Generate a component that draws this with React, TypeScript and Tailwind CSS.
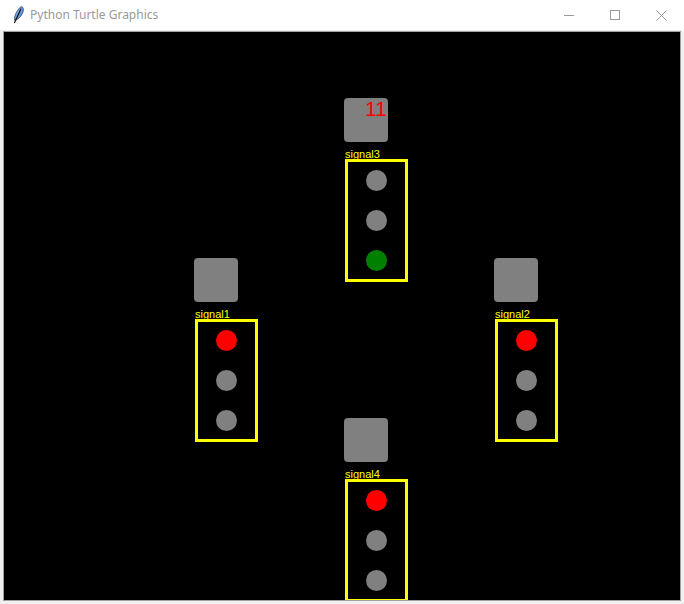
import React from 'react';

type Signal = {
  name: string;
  x: number;
  y: number;
  lights: string[];
  timer?: string;
};

// positions are relative to the black turtle canvas
const signals: Signal[] = [
  { name: 'signal3', x: 340, y: 66, lights: ['bg-[#808080]', 'bg-[#808080]', 'bg-[#008000]'], timer: '11' },
  { name: 'signal1', x: 190, y: 226, lights: ['bg-[#ff0000]', 'bg-[#808080]', 'bg-[#808080]'] },
  { name: 'signal2', x: 490, y: 226, lights: ['bg-[#ff0000]', 'bg-[#808080]', 'bg-[#808080]'] },
  { name: 'signal4', x: 340, y: 386, lights: ['bg-[#ff0000]', 'bg-[#808080]', 'bg-[#808080]'] },
];

const Feather: React.FC = () => (
  <svg width="16" height="18" viewBox="0 0 16 18">
    <defs>
      <linearGradient id="fg" x1="0" y1="0" x2="1" y2="1">
        <stop offset="0" stopColor="#b8d6fa" />
        <stop offset="0.6" stopColor="#5f93dc" />
        <stop offset="1" stopColor="#3a6cc0" />
      </linearGradient>
    </defs>
    <path d="M13 0.8 C15.6 2 14.4 7 11.4 10.6 C9.4 13 7.4 14.2 5.6 14.2 C5.1 12 6.2 8 8.2 5 C9.8 2.7 11.4 0.3 13 0.8 Z" fill="url(#fg)" stroke="#2a4270" strokeWidth="0.8" />
    <path d="M11.8 3 L5.6 16.6" stroke="#111" strokeWidth="1.2" strokeLinecap="round" />
  </svg>
);

const TrafficSignal: React.FC<{ s: Signal }> = ({ s }) => (
  <>
    <div className="absolute w-[44px] h-[44px] rounded-[4px] bg-[#808080]" style={{ left: s.x, top: s.y }} />
    {s.timer && (
      <div
        className="absolute text-[21px] leading-none text-[#ff0000] font-['Liberation_Sans',Arial,sans-serif]"
        style={{ left: s.x + 21, top: s.y }}
      >
        {s.timer}
      </div>
    )}
    <div
      className="absolute text-[11px] leading-none text-[#ffff00] font-['Liberation_Sans',Arial,sans-serif]"
      style={{ left: s.x + 1, top: s.y + 51 }}
    >
      {s.name}
    </div>
    <div
      className="absolute w-[63px] h-[123px] border-[3px] border-[#ffff00]"
      style={{ left: s.x + 1, top: s.y + 61 }}
    />
    {s.lights.map((c, i) => (
      <div
        key={i}
        className={`absolute w-[21px] h-[21px] rounded-full ${c}`}
        style={{ left: s.x + 22, top: s.y + 72 + i * 40 }}
      />
    ))}
  </>
);

const App: React.FC = () => {
  return (
    <div className="w-[684px] h-[604px] bg-[#f0f0f0] flex flex-col overflow-hidden">
      {/* Title bar */}
      <div className="h-[30px] bg-white flex items-center shrink-0">
        <div className="ml-[9px] mt-[-1px] flex items-center">
          <Feather />
        </div>
        <span className="ml-[5px] text-[12px] text-[#999999] font-['Noto_Sans','Segoe_UI',sans-serif]">
          Python Turtle Graphics
        </span>
        <div className="ml-auto flex items-center h-full">
          <div className="w-[46px] h-full flex items-center justify-center">
            <div className="w-[10px] h-px bg-[#999999]" />
          </div>
          <div className="w-[46px] h-full flex items-center justify-center">
            <div className="w-[10px] h-[10px] border border-[#999999]" />
          </div>
          <div className="w-[46px] h-full flex items-center justify-center">
            <svg width="11" height="11" viewBox="0 0 11 11">
              <path d="M0.5 0.5 L10.5 10.5 M10.5 0.5 L0.5 10.5" stroke="#999999" strokeWidth="1" />
            </svg>
          </div>
        </div>
      </div>

      {/* Canvas area */}
      <div className="pt-[1px] px-[3px] pb-[3px]">
        <div className="border border-[#a0a0a0]">
          <div className="relative w-[676px] h-[568px] bg-black overflow-hidden">
            {signals.map((s) => (
              <TrafficSignal key={s.name} s={s} />
            ))}
          </div>
        </div>
      </div>
    </div>
  );
};

export default App;
